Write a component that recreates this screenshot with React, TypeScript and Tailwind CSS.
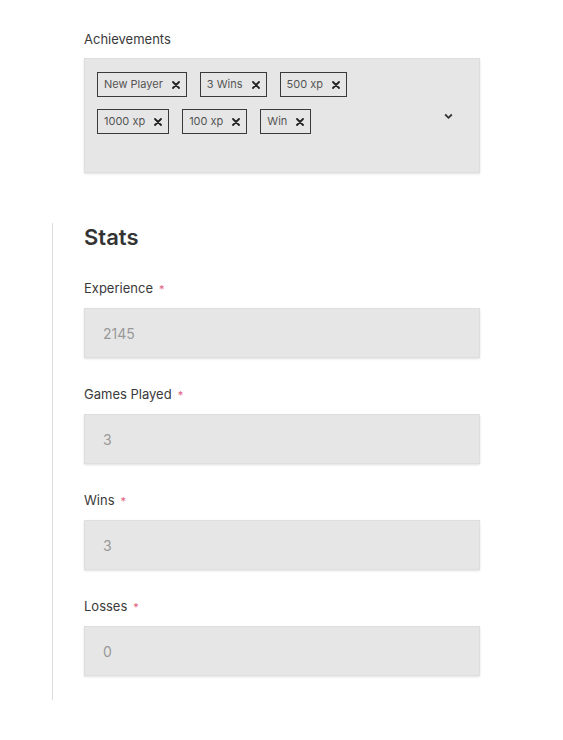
import React from "react";

const tags1 = ["New Player", "3 Wins", "500 xp"];
const tags2 = ["1000 xp", "100 xp", "Win"];

function X() {
  return (
    <svg width="8" height="8" viewBox="0 0 8 8" className="ml-[9px]">
      <path d="M1 1 L7 7 M7 1 L1 7" stroke="#222" strokeWidth="1.8" strokeLinecap="round" />
    </svg>
  );
}

function Tag({ label }: { label: string }) {
  return (
    <div className="flex h-[25px] items-center border border-[#3a3a3a] pl-[6px] pr-[6px] text-[11px] text-[#555]">
      <span>{label}</span>
      <X />
    </div>
  );
}

function Field({ label, value }: { label: string; value: string }) {
  return (
    <div className="mt-[29px] first:mt-0">
      <div className="flex h-[16px] items-center text-[13px] text-[#3a3a3a]">
        {label}
        <span className="ml-[6px] text-[11px] text-[#e0607e]">*</span>
      </div>
      <div className="mt-[11px] flex h-[50px] w-[396px] items-center border border-[#dedede] bg-[#e6e6e6] pl-[18px] text-[14px] text-[#999] shadow-[0_1px_2px_rgba(0,0,0,0.12)]">
        {value}
      </div>
    </div>
  );
}

export default function App() {
  return (
    <div className="min-h-[740px] bg-white pt-[32px]" style={{ fontFamily: "Inter, 'Liberation Sans', sans-serif" }}>
      <div className="pl-[84px]">
        <div className="flex h-[16px] items-center text-[13px] text-[#3a3a3a]">Achievements</div>
        <div className="relative mt-[10px] h-[115px] w-[396px] border border-[#dedede] bg-[#e6e6e6] pl-[12px] pt-[13px] shadow-[0_1px_2px_rgba(0,0,0,0.12)]">
          <div className="flex gap-[13px]">
            {tags1.map((t) => (
              <Tag key={t} label={t} />
            ))}
          </div>
          <div className="mt-[12px] flex gap-[13px]">
            {tags2.map((t) => (
              <Tag key={t} label={t} />
            ))}
          </div>
          <svg className="absolute left-[359px] top-[54px]" width="9" height="7" viewBox="0 0 9 7">
            <path d="M1.2 1.5 L4.5 4.8 L7.8 1.5" stroke="#333" strokeWidth="1.8" fill="none" />
          </svg>
        </div>
      </div>
      <div className="ml-[52px] mt-[50px] border-l border-[#dcdcdc] pb-[24px] pl-[31px]">
        <h2 className="flex h-[28px] items-center text-[22px] font-semibold text-[#333]">Stats</h2>
        <div className="mt-[30px]">
          <Field label="Experience" value="2145" />
          <Field label="Games Played" value="3" />
          <Field label="Wins" value="3" />
          <Field label="Losses" value="0" />
        </div>
      </div>
    </div>
  );
}
